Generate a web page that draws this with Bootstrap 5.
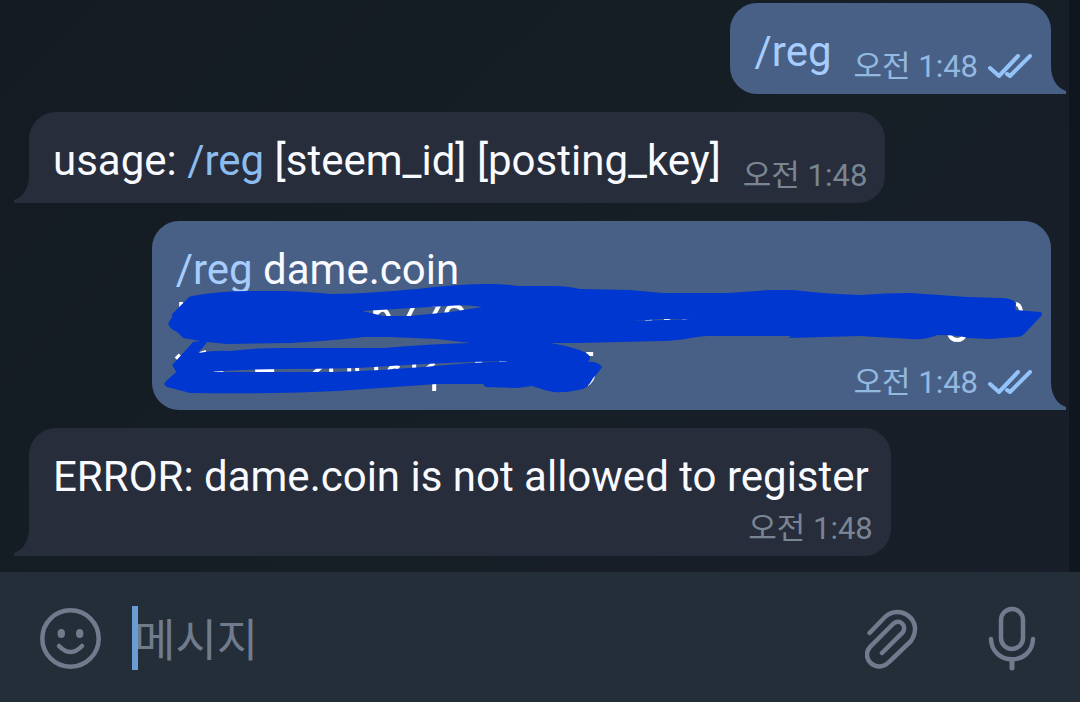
<!DOCTYPE html>
<html lang="ko">
<head>
<meta charset="utf-8">
<meta name="viewport" content="width=device-width, initial-scale=1">
<title>Chat</title>
<link href="https://cdn.jsdelivr.net/npm/bootstrap@5.3.0/dist/css/bootstrap.min.css" rel="stylesheet">
<style>
  body { background: #151c25; color: #f8faff; font-family: Roboto, "Noto Sans CJK KR", sans-serif; font-size: 42px; line-height: 50px; }
  .chat { gap: 18px; padding: 3px 18px 16px 29px; border-right: 11px solid #10161e; background: linear-gradient(135deg, #141b22, #161e26 55%, #191f2a); }
  .bubble { padding: 24px 18px 9px 24px; border-radius: 27px; column-gap: 22px; }
  .bubble p { margin-bottom: 8px; }
  .incoming { background: #272d3a; border-bottom-left-radius: 0; }
  .outgoing { background: #486086; border-bottom-right-radius: 0; }
  .stacked p { margin-bottom: 9px; padding-right: 4px; }
  .long-message { width: 88%; min-height: 189px; }
  .command { color: #a6cdfd; text-decoration: none; }
  .incoming .command { color: #8bbcef; }
  .stamp { font-size: 31px; line-height: 36px; color: #7a8594; white-space: nowrap; }
  .outgoing .stamp { color: #94b9e0; gap: 10px; }
  .tail { position: absolute; bottom: 0; width: 15px; height: 28px; }
  .incoming .tail { left: -15px; fill: #272d3a; }
  .outgoing .tail { right: -15px; fill: #486086; }
  .scribble { position: absolute; inset: 0; width: 100%; height: 100%; }
  .composer { background: #242e39; min-height: 130px; padding: 2px 40px 0; color: #707c8d; }
  .composer button { color: inherit; background: none; border: 0; padding: 0; line-height: 0; }
  .composer input { background: none; border: 0; padding: 6px 0 0 2px; color: #f8faff; font-size: 45px; line-height: 58px; height: 64px; outline: 0; width: 100%; }
  .composer input::placeholder { color: #707c8d; opacity: 1; }
  .entry { margin: 0 31px; }
  .caret { position: absolute; left: 0; top: 0; width: 6px; height: 64px; background: #6a9dd3; }
  .tools { gap: 66px; }
</style>
</head>
<body class="d-flex flex-column min-vh-100">
<svg class="d-none">
  <symbol id="tail-right" viewBox="0 0 15 28"><path d="M0 0C0 13 6 22 15 25V28H0Z"/></symbol>
  <symbol id="tail-left" viewBox="0 0 15 28"><path d="M15 0C15 13 9 22 0 25V28H15Z"/></symbol>
  <symbol id="read" viewBox="0 0 44 26"><path d="M2 14L11 22L30 2M19 20L22 22L42 2" fill="none" stroke="#94c3f9" stroke-width="4" stroke-linecap="round" stroke-linejoin="round"/></symbol>
</svg>
<main class="chat d-flex flex-column flex-grow-1">
  <article class="bubble outgoing position-relative d-flex align-items-end align-self-end">
    <p><a class="command" href="#reg">/reg</a></p>
    <div class="stamp d-flex align-items-center"><time>오전 1:48</time><svg width="45" height="26" viewBox="0 0 45 26" aria-label="읽음"><use href="#read" width="44" height="26"/></svg></div>
    <svg class="tail"><use href="#tail-right"/></svg>
  </article>

  <article class="bubble incoming position-relative d-flex align-items-end align-self-start">
    <p>usage: <a class="command" href="#reg">/reg</a> [steem_id] [posting_key]</p>
    <time class="stamp">오전 1:48</time>
    <svg class="tail"><use href="#tail-left"/></svg>
  </article>

  <article class="bubble outgoing long-message position-relative d-flex flex-column justify-content-between align-self-end">
    <p><a class="command" href="#reg">/reg</a> dame.coin</p>
    <div class="stamp d-flex align-items-center align-self-end"><time>오전 1:48</time><svg width="45" height="26" viewBox="0 0 45 26" aria-label="읽음"><use href="#read" width="44" height="26"/></svg></div>
    <svg class="scribble" viewBox="152 221 899 189" aria-hidden="true">
      <g fill="none" stroke="#fff" stroke-width="4">
        <path d="M375 320V308M376 314Q384 304 389 317M407 319L413 307M431 320L439 305H426M446 316Q446 306 454 306T463 314"/>
        <path d="M181 302V309M176 359L180 355M200 354L206 352M434 374V391M586 354H593M587 384Q592 381 593 375M949 334Q951 340 957 340T965 334M1014 304Q1020 303 1021 312"/>
        <path d="M214 373L223 371M255 371H274M313 374L322 366M331 374V366M349 374V366M357 374V366M376 374V364M388 374Q390 363 399 368M414 371V364M426 369L434 363M475 362H482M499 361H506M645 320H652M664 320H670M682 319H687"/>
      </g>
      <path fill="#0037d0" fill-rule="evenodd" d="M192 296Q220 291 250 291L283 291Q310 292 330 294C360 294 390 291 417 289C440 286 465 284 490 284Q505 284 517 286L555 286Q566 286 580 289L630 290L663 293L727 293L770 290L793 290Q825 294 860 295Q885 293 910 293Q940 295 967 297L1000 298Q1012 298 1016 303L1015 310L1040 312Q1043 313 1041 316L1024 334Q1021 337 1016 337L990 339L967 338Q960 335 937 335Q927 340 910 339L860 336L788 338L791 336H760L707 336C690 337 680 341 663 341L577 343H550Q590 350 590 358L588 362Q597 361 602 367Q598 373 593 378Q587 390 578 390Q565 393 553 392Q543 390 532 386L517 388L485 387L483 384H437L337 391Q280 394 190 393L167 387Q162 385 166 381L176 372L172 365L193 342L200 341L183 338L177 332Q169 329 168 323L172 317V314L187 299Q189 296 192 296Z
        M207 342L198 353Q214 350 230 351Q255 348 283 348H383Q430 344 470 343L437 339L390 337H363Q340 340 290 343L227 344Z
        M362 311L447 306Q466 304 482 307L450 312L410 316L383 316Z
        M208 372Q245 369 283 369Q320 369 357 368L423 364L470 362L515 361L470 363L423 367L380 370L337 372Z
        M633 321L663 319L693 319L663 320Z"/>
    </svg>
    <svg class="tail"><use href="#tail-right"/></svg>
  </article>

  <article class="bubble incoming stacked position-relative d-flex flex-column align-self-start">
    <p>ERROR: dame.coin is not allowed to register</p>
    <time class="stamp align-self-end">오전 1:48</time>
    <svg class="tail"><use href="#tail-left"/></svg>
  </article>
</main>

<form class="composer d-flex align-items-center">
  <button type="button" aria-label="이모티콘">
    <svg width="61" height="61" viewBox="0 0 61 61" fill="none" stroke="currentColor" stroke-width="4.5" stroke-linecap="round"><circle cx="30.5" cy="30.5" r="28.2"/><path d="M19 38Q30.5 50 42 38"/><g fill="currentColor" stroke="none"><ellipse cx="21.3" cy="25.5" rx="3.7" ry="4.5"/><ellipse cx="39.7" cy="25.5" rx="3.7" ry="4.5"/></g></svg>
  </button>
  <div class="entry position-relative flex-grow-1">
    <input class="d-block" type="text" placeholder="메시지" aria-label="메시지">
    <span class="caret"></span>
  </div>
  <div class="tools d-flex align-items-center">
    <button type="button" aria-label="첨부">
      <svg width="53" height="61" viewBox="0 0 53 61" fill="none" stroke="currentColor" stroke-width="4.5" stroke-linecap="round"><path d="M4.5 25L20 9C34-5 60 12 46 33L24 54C12 66-5 51 5 39L28 16C34 10 42 17 38 24L17 45"/></svg>
    </button>
    <button type="button" aria-label="음성 메시지">
      <svg width="56" height="65" viewBox="0 0 56 65" fill="none" stroke="currentColor" stroke-linecap="round"><rect x="17" y="3" width="22" height="40" rx="11" stroke-width="4.5"/><path d="M7 33C8 60 48 60 49 33" stroke-width="4.5"/><path d="M28 54V62" stroke-width="5"/></svg>
    </button>
  </div>
</form>
<script src="https://cdn.jsdelivr.net/npm/bootstrap@5.3.0/dist/js/bootstrap.bundle.min.js"></script>
</body>
</html>
